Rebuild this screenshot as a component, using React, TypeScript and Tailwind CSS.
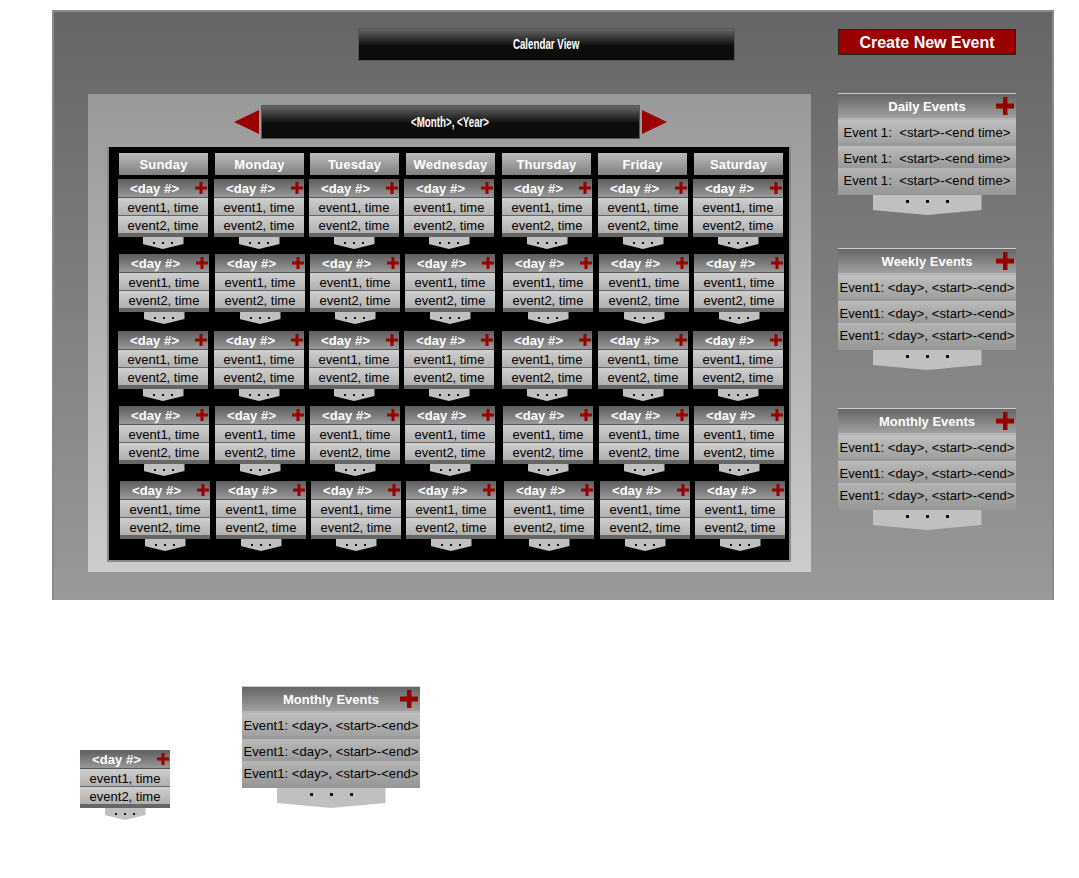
import React from 'react'

const DAYS = ['Sunday', 'Monday', 'Tuesday', 'Wednesday', 'Thursday', 'Friday', 'Saturday']
const COL_GAPS = ['', 'ml-[6px]', 'ml-[5px]', 'ml-[5px]', 'ml-[8px]', 'ml-[6px]', 'ml-[5px]']
const HEAD_GAPS = ['', 'ml-[7px]', 'ml-[6px]', 'ml-[7px]', 'ml-[7px]', 'ml-[7px]', 'ml-[7px]']
const WEEKS = [
  'mt-[4px] pl-[9px]',
  'mt-[5px] pl-[10px]',
  'mt-[7px] pl-[9px]',
  'mt-[5px] pl-[10px]',
  'mt-[5px] pl-[11px]',
]

const Plus: React.FC<{ big?: boolean }> = ({ big }) =>
  big ? (
    <svg width="18" height="18" viewBox="0 0 18 18" className="shrink-0">
      <path d="M7 0h4.500v6.500H18v5h-6.500V18H7v-6.500H0v-5h7z" fill="#990000" />
    </svg>
  ) : (
    <svg width="12" height="12" viewBox="0 0 12 12" className="shrink-0">
      <path d="M4.500 0h3v4.500H12v3H7.500V12h-3V7.500H0v-3h4.500z" fill="#990000" />
    </svg>
  )

const Triangle: React.FC<{ flip?: boolean }> = ({ flip }) => (
  <svg width="25" height="24" viewBox="0 0 25 24" className="shrink-0">
    <polygon points={flip ? '0,0 25,12 0,24' : '25,0 0,12 25,24'} fill="#990000" />
  </svg>
)

const DayCell: React.FC<{ className?: string }> = ({ className = '' }) => (
  <div className={`w-[90px] h-[70px] shrink-0 flex flex-col items-center ${className}`}>
    <div className="w-full h-[19px] flex items-center pl-[12px] pr-[1px] border-b border-[#555] bg-gradient-to-b from-[#5e5e5e] to-[#999] text-white font-bold text-[13px] tracking-[0.1px]">
      <span className="pt-[2px]">&lt;day #&gt;</span>
      <span className="ml-auto"><Plus /></span>
    </div>
    <div className="w-full h-[18px] pt-[2px] flex items-center justify-center border-b border-[#666] bg-gradient-to-b from-[#cfcfcf] to-[#b0b0b0] text-[13px] text-black">
      event1, time
    </div>
    <div className="w-full h-[17px] pt-[2px] flex items-center justify-center bg-gradient-to-b from-[#cfcfcf] to-[#b0b0b0] text-[13px] text-black">
      event2, time
    </div>
    <div className="w-full h-[4px] bg-[#666]" />
    <div className="w-[41px] h-[12px] pt-[5px] flex justify-center gap-[7px] bg-[#c0c0c0] [clip-path:polygon(0_0,100%_0,100%_58%,50%_100%,0_58%)]">
      <span className="w-[2px] h-[2px] bg-[#111]" />
      <span className="w-[2px] h-[2px] bg-[#111]" />
      <span className="w-[2px] h-[2px] bg-[#111]" />
    </div>
  </div>
)

const EventPanel: React.FC<{ title: string; row: string; className?: string }> = ({ title, row, className = '' }) => (
  <div className={`w-[178px] h-[122px] shrink-0 flex flex-col items-center ${className}`}>
    <div className="w-full h-[25px] flex items-center border-t border-[#ccc] bg-gradient-to-b from-[#666] to-[#a0a0a0] pr-[2px] pl-[20px]">
      <span className="flex-1 pt-[2px] text-center text-white font-bold text-[13px] whitespace-nowrap">{title}</span>
      <Plus big />
    </div>
    <div className="w-full h-[28px] pt-[1px] border-t-2 border-b-[3px] border-t-[#b4b4b4] border-b-[#999] bg-gradient-to-b from-[#c0c0c0] to-[#a0a0a0] text-center text-[13px] tracking-[0.08px] leading-[23px] whitespace-pre text-black">
      {row}
    </div>
    <div className="w-full h-[22px] pt-[3px] bg-gradient-to-b from-[#bbb] to-[#999] text-center text-[13px] tracking-[0.08px] leading-[19px] whitespace-pre text-black">
      {row}
    </div>
    <div className="w-full h-[27px] pt-[2px] bg-gradient-to-b from-[#b4b4b4] to-[#969696] text-center text-[13px] tracking-[0.08px] leading-[22px] whitespace-pre text-black">
      {row}
    </div>
    <div className="w-[109px] h-[20px] pt-[5px] flex justify-center gap-[17px] bg-[#c0c0c0] [clip-path:polygon(0_0,100%_0,100%_75%,50%_100%,0_75%)]">
      <span className="w-[3px] h-[3px] bg-[#111]" />
      <span className="w-[3px] h-[3px] bg-[#111]" />
      <span className="w-[3px] h-[3px] bg-[#111]" />
    </div>
  </div>
)

const TitleBar: React.FC<{ label: string; className?: string }> = ({ label, className = '' }) => (
  <div className={`flex items-center justify-center border border-[#555] bg-[linear-gradient(#666,#0c0c0c_55%)] text-white font-bold text-[15px] ${className}`}>
    <span className="inline-block scale-x-[0.65] whitespace-nowrap">{label}</span>
  </div>
)

export default function App() {
  const rowDay = 'Event1: <day>, <start>-<end>'

  return (
    <div className="w-[1079px] h-[878px] bg-white pt-[10px] overflow-hidden font-['Liberation_Sans',Arial,sans-serif]">
      <div className="ml-[52px] w-[1002px] h-[590px] flex border-2 border-b-0 border-[#8a8a8a] bg-gradient-to-b from-[#666] to-[#999]">
        <div className="w-[784px] shrink-0">
          <TitleBar label="Calendar View" className="mt-[16px] ml-[304px] w-[377px] h-[33px]" />

          <div className="mt-[33px] ml-[34px] w-[723px] h-[478px] pt-[11px] bg-gradient-to-b from-[#999] to-[#ccc]">
            <div className="flex items-center pl-[146px] gap-[2px]">
              <Triangle />
              <TitleBar label="<Month>, <Year>" className="w-[379px] h-[34px]" />
              <Triangle flip />
            </div>

            <div className="mt-[8px] ml-[19px] w-[684px] h-[415px] bg-black border-2 border-t-0 border-[#888] pt-[6px]">
              <div className="flex pl-[10px]">
                {DAYS.map((day, i) => (
                  <div
                    key={day}
                    className={`w-[89px] h-[22px] shrink-0 pt-[1px] flex items-center justify-center bg-gradient-to-b from-[#bbb] to-[#808080] text-white font-bold text-[13px] tracking-[0.2px] ${HEAD_GAPS[i]}`}
                  >
                    {day}
                  </div>
                ))}
              </div>
              {WEEKS.map((week) => (
                <div key={week} className={`flex ${week}`}>
                  {DAYS.map((day, i) => (
                    <DayCell key={day} className={COL_GAPS[i]} />
                  ))}
                </div>
              ))}
            </div>
          </div>
        </div>

        <div className="w-[178px] shrink-0">
          <button className="mt-[17px] w-[178px] h-[26px] pt-[2px] flex items-center justify-center bg-[#990000] border border-[#222] text-white font-bold text-[16px]">
            Create New Event
          </button>
          <EventPanel title="Daily Events" row="Event 1:  <start>-<end time>" className="mt-[38px]" />
          <EventPanel title="Weekly Events" row={rowDay} className="mt-[33px]" />
          <EventPanel title="Monthly Events" row={rowDay} className="mt-[38px]" />
        </div>
      </div>

      <div className="mt-[86px] ml-[80px] flex items-start">
        <DayCell className="mt-[64px]" />
        <EventPanel title="Monthly Events" row={rowDay} className="ml-[72px]" />
      </div>
    </div>
  )
}
